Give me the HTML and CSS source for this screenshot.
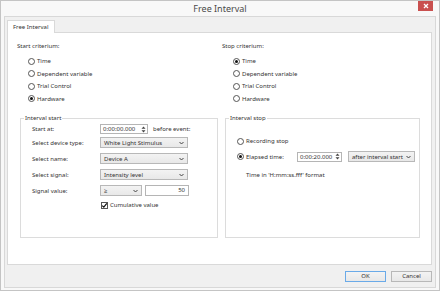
FILE: index.html
```html
<!DOCTYPE html>
<html>
<head>
<meta charset="utf-8">
<link rel="stylesheet" href="styles.css">
</head>
<body>
<div class="window">
  <div class="titlebar">
    <span class="title">Free Interval</span>
    <span class="close"><svg width="6" height="6" viewBox="0 0 6 6"><path d="M1 1L5 5M5 1L1 5" stroke="#fff" stroke-width="1.3"/></svg></span>
  </div>
  <div class="client">
    <div class="tabs"><div class="tab">Free Interval</div></div>
    <div class="panel">
      <div class="col col-left">
        <div class="heading">Start criterium:</div>
        <div class="radios">
          <div class="radio"><span class="rb"></span>Time</div>
          <div class="radio"><span class="rb"></span>Dependent variable</div>
          <div class="radio"><span class="rb"></span>Trial Control</div>
          <div class="radio"><span class="rb on"></span>Hardware</div>
        </div>
        <fieldset class="group">
          <legend>Interval start</legend>
          <div class="form">
            <div class="row row-first">
              <span class="lbl">Start at:</span>
              <span class="spin spin-start"><span class="val">0:00:00.000</span><svg class="arrows" width="5" height="7" viewBox="0 0 5 7"><path d="M2.5 0.5L4.5 2.7H0.5Z M2.5 6.5L4.5 4.3H0.5Z" fill="#444"/></svg></span>
              <span class="after">before event:</span>
            </div>
            <div class="row row-combo1">
              <span class="lbl">Select device type:</span>
              <span class="combo combo-wide"><span class="val">White Light Stimulus</span><svg class="chev" width="5" height="4" viewBox="0 0 5 4"><path d="M0.5 1L2.5 3L4.5 1" fill="none" stroke="#444" stroke-width="1"/></svg></span>
            </div>
            <div class="row row-combo">
              <span class="lbl">Select name:</span>
              <span class="combo combo-wide"><span class="val">Device A</span><svg class="chev" width="5" height="4" viewBox="0 0 5 4"><path d="M0.5 1L2.5 3L4.5 1" fill="none" stroke="#444" stroke-width="1"/></svg></span>
            </div>
            <div class="row row-combo">
              <span class="lbl">Select signal:</span>
              <span class="combo combo-wide"><span class="val">Intensity level</span><svg class="chev" width="5" height="4" viewBox="0 0 5 4"><path d="M0.5 1L2.5 3L4.5 1" fill="none" stroke="#444" stroke-width="1"/></svg></span>
            </div>
            <div class="row row-combo">
              <span class="lbl">Signal value:</span>
              <span class="combo combo-small"><span class="val">≥</span><svg class="chev" width="5" height="4" viewBox="0 0 5 4"><path d="M0.5 1L2.5 3L4.5 1" fill="none" stroke="#444" stroke-width="1"/></svg></span>
              <span class="textbox">50</span>
            </div>
            <div class="row row-check">
              <span class="lbl"></span>
              <span class="check"><span class="cb"><svg width="7" height="7" viewBox="0 0 7 7"><path d="M1.2 3.6L2.8 5.2L5.8 1.4" fill="none" stroke="#111" stroke-width="1.2"/></svg></span>Cumulative value</span>
            </div>
          </div>
        </fieldset>
      </div>
      <div class="col col-right">
        <div class="heading">Stop criterium:</div>
        <div class="radios">
          <div class="radio"><span class="rb on"></span>Time</div>
          <div class="radio"><span class="rb"></span>Dependent variable</div>
          <div class="radio"><span class="rb"></span>Trial Control</div>
          <div class="radio"><span class="rb"></span>Hardware</div>
        </div>
        <fieldset class="group">
          <legend>Interval stop</legend>
          <div class="stopform">
            <div class="srow srow-first">
              <div class="radio"><span class="rb"></span>Recording stop</div>
            </div>
            <div class="srow srow-elapsed">
              <div class="radio radio-fixed"><span class="rb on"></span>Elapsed time:</div>
              <span class="spin spin-stop"><span class="val">0:00:20.000</span><svg class="arrows" width="5" height="7" viewBox="0 0 5 7"><path d="M2.5 0.5L4.5 2.7H0.5Z M2.5 6.5L4.5 4.3H0.5Z" fill="#444"/></svg></span>
              <span class="combo combo-after"><span class="val">after interval start</span><svg class="chev" width="5" height="4" viewBox="0 0 5 4"><path d="M0.5 1L2.5 3L4.5 1" fill="none" stroke="#444" stroke-width="1"/></svg></span>
            </div>
            <div class="note">Time in 'H:mm:ss.fff' format</div>
          </div>
        </fieldset>
      </div>
    </div>
    <div class="footer">
      <button class="btn btn-default">OK</button>
      <button class="btn">Cancel</button>
    </div>
  </div>
</div>
</body>
</html>
```
FILE: styles.css
```css
* { box-sizing: border-box; }
html, body { margin: 0; padding: 0; }
body {
  width: 440px;
  height: 291px;
  overflow: hidden;
  background: #ffffff;
  font-family: "Noto Sans", "Open Sans", sans-serif;
  font-size: 6px;
  color: #333;
}
.window {
  width: 440px;
  height: 291px;
  border: 1px solid #c4c4c4;
  background: #f8f8f8;
  padding: 0 3px 2px 3px;
  display: flex;
  flex-direction: column;
}
.titlebar {
  height: 15px;
  flex: none;
  display: grid;
  grid-template-columns: 1fr auto 1fr;
  align-items: start;
}
.title {
  grid-column: 2;
  font-size: 9px;
  line-height: 15px;
  color: #4a4a4a;
}
.close {
  grid-column: 3;
  justify-self: end;
  width: 15px;
  height: 10px;
  margin-right: 3px;
  background: #c9504f;
  display: flex;
  align-items: center;
  justify-content: center;
}
.client {
  flex: 1;
  border: 1px solid #d8d8d8;
  background: #f0f0f0;
  padding: 3px 3px 5px 2px;
  display: flex;
  flex-direction: column;
}
.tabs { display: flex; flex: none; }
.tab {
  height: 13px;
  margin-bottom: -1px;
  padding: 0 5px;
  line-height: 12px;
  background: #fff;
  border: 1px solid #d9d9d9;
  border-bottom: none;
  position: relative;
  z-index: 1;
}
.panel {
  flex: 1;
  background: #fff;
  border: 1px solid #d9d9d9;
  padding: 8px 0 0 9px;
  display: grid;
  grid-template-columns: 201px 198px;
  column-gap: 4px;
  align-items: start;
}
.col { display: flex; flex-direction: column; }
.heading { line-height: 10px; height: 10px; }
.radios { margin-top: 4px; display: flex; flex-direction: column; padding-left: 11px; }
.radio {
  height: 12.5px;
  display: flex;
  align-items: center;
  gap: 2px;
  white-space: nowrap;
}
.rb {
  width: 7px;
  height: 7px;
  border: 1px solid #555;
  border-radius: 50%;
  background: #fff;
  flex: none;
  display: flex;
  align-items: center;
  justify-content: center;
}
.rb.on::after {
  content: "";
  width: 3px;
  height: 3px;
  border-radius: 50%;
  background: #111;
}
.group {
  margin: 8px 0 0 3px;
  padding: 0;
  height: 125px;
  border: 1px solid #dcdcdc;
  min-width: 0;
}
.group legend {
  margin-left: 3px;
  padding: 0 1px;
  line-height: 10px;
  height: 10px;
}
.form { padding: 1px 0 0 11px; display: flex; flex-direction: column; }
.row { display: flex; align-items: center; white-space: nowrap; }
.row .lbl { width: 68px; flex: none; }
.row-first { height: 10px; }
.row-combo1 { height: 11px; margin-top: 3px; }
.row-combo { height: 11px; margin-top: 5px; }
.row-check { height: 10px; margin-top: 4px; }
.spin {
  height: 10px;
  background: #fff;
  border: 1px solid #b5b5b5;
  display: flex;
  align-items: center;
  justify-content: space-between;
  padding: 0 1px 0 2px;
}
.spin-start { width: 48px; }
.spin-stop { width: 45px; }
.after { margin-left: 5px; }
.combo {
  height: 11px;
  border: 1px solid #b8b8b8;
  background: linear-gradient(#f3f3f3, #e8e8e8);
  display: flex;
  align-items: center;
  justify-content: space-between;
  padding: 0 3px 0 3px;
  overflow: hidden;
}
.combo-wide { width: 88px; }
.combo-small { width: 42px; }
.combo-after { width: 67px; margin-left: 6px; }
.textbox {
  width: 44px;
  height: 11px;
  margin-left: 3px;
  background: #fff;
  border: 1px solid #b5b5b5;
  text-align: right;
  padding-right: 3px;
  line-height: 9px;
}
.check { display: flex; align-items: center; gap: 2px; margin-left: 1px; }
.cb {
  width: 7px;
  height: 7px;
  border: 1px solid #555;
  background: #fff;
  display: flex;
  align-items: center;
  justify-content: center;
}
.cb svg { flex: none; margin: -1px; }
.stopform { padding: 13px 0 0 11px; display: flex; flex-direction: column; }
.srow { display: flex; align-items: center; white-space: nowrap; }
.srow-first { height: 10px; }
.srow-elapsed { height: 11px; margin-top: 5px; }
.radio-fixed { width: 60px; height: 11px; flex: none; }
.note { margin-top: 8px; line-height: 10px; padding-left: 9px; }
.footer {
  flex: none;
  margin-top: 6px;
  height: 11px;
  display: flex;
  justify-content: flex-end;
  gap: 5px;
}
.btn {
  width: 41px;
  height: 11px;
  padding: 0;
  margin: 0;
  font: inherit;
  color: #333;
  border: 1px solid #b8b8b8;
  background: linear-gradient(#f3f3f3, #e8e8e8);
  line-height: 9px;
}
.btn-default { border-color: #6aaae8; }
```
